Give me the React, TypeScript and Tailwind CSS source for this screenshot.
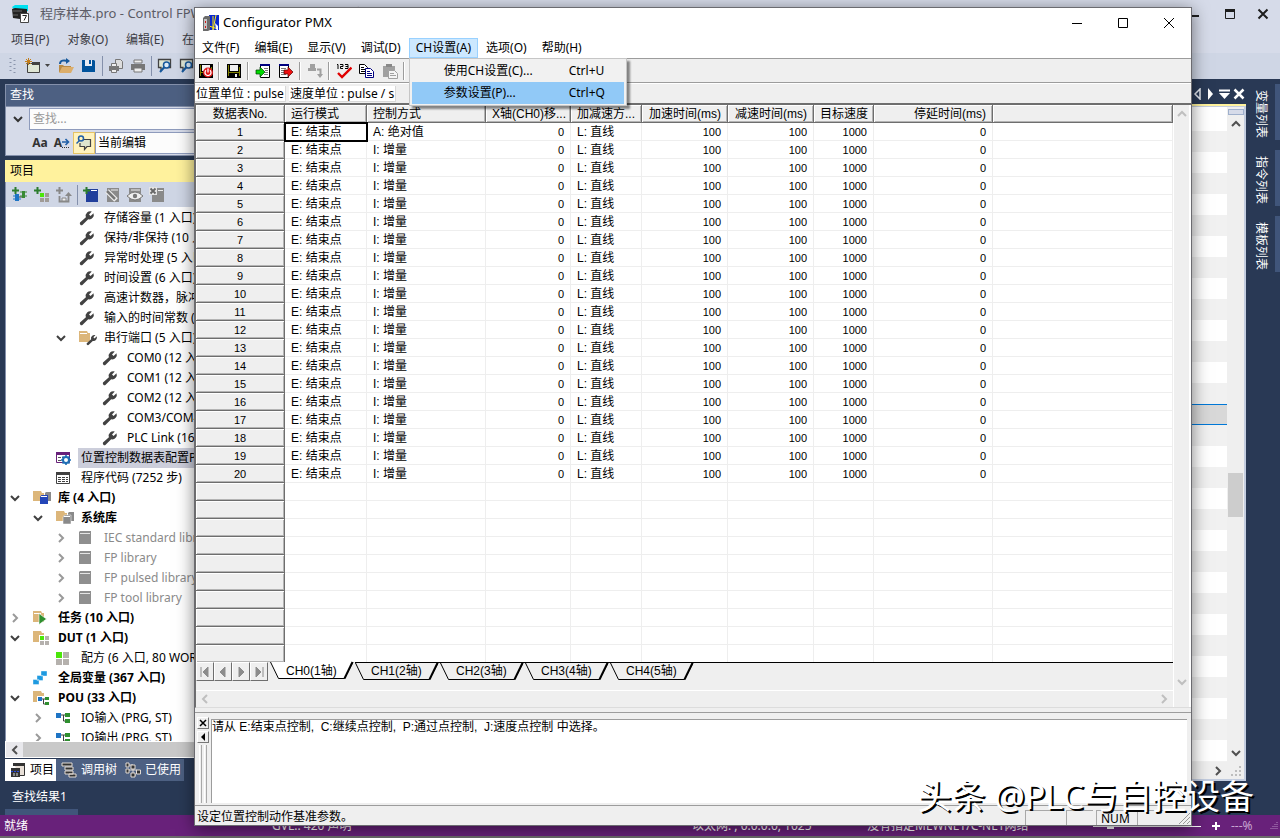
import { useState } from "react";
import type { ReactNode } from "react";
import clsx from "clsx";

const UI_FONT = "font-['Noto_Sans','Noto_Sans_CJK_SC',sans-serif]";
const GRID_FONT = "font-['Liberation_Sans','Noto_Sans_CJK_SC',sans-serif]";

/* ---------- icons ---------- */

type IconProps = { children: ReactNode; w?: number; h?: number };

const Icon = ({ children, w = 16, h = 16 }: IconProps) => (
  <svg width={w} height={h} viewBox={`0 0 ${w} ${h}`} fill="none" className="shrink-0" aria-hidden="true">
    {children}
  </svg>
);

type Direction = "up" | "down" | "left" | "right";

const chevrons: Record<Direction, string> = {
  up: "M1 7l4-4 4 4",
  down: "M1 3l4 4 4-4",
  left: "M7 1L3 5l4 4",
  right: "M3 1l4 4-4 4",
};

const Chevron = ({ dir, color = "#505050" }: { dir: Direction; color?: string }) => (
  <Icon w={10} h={10}>
    <path d={chevrons[dir]} stroke={color} strokeWidth="2" />
  </Icon>
);

const WRENCH =
  "M14.5 3.2L11.6 6 10 4.4l2.8-2.9A4.6 4.6 0 0 0 6.9 7.2L1 12.6A1.8 1.8 0 0 0 3.4 15l5.8-5.7A4.6 4.6 0 0 0 14.5 3.2z";

const FOLDER = "M0 1h8l1 2h2v9H0z";

const treeIcons: Record<string, ReactNode> = {
  wrench: (
    <Icon>
      <path d={WRENCH} fill="#424242" />
    </Icon>
  ),
  folderWrench: (
    <Icon w={19}>
      <path d={FOLDER} fill="#dcb67a" />
      <path d="M1 3.5h7" stroke="#fff" />
      <path d={WRENCH} fill="#424242" transform="translate(7 4) scale(.74)" />
    </Icon>
  ),
  config: (
    <Icon>
      <path d="M.5 2.5h13v10H.5z" fill="#fff" stroke="#68217a" />
      <path d="M0 2h14v3H0z" fill="#68217a" />
      <path d="M2 7.5h3M2 10.5h3M6 7.5h2" stroke="#555" />
      <circle cx="10" cy="10" r="3" fill="#fff" stroke="#1f6fb5" strokeWidth="2" />
      <path d="M10 5v2M10 13v2M5 10h2M13 10h2M6.5 6.5l1.3 1.3M12.2 12.2l1.3 1.3M13.5 6.5l-1.3 1.3M7.8 12.2l-1.3 1.3" stroke="#1f6fb5" strokeWidth="1.6" />
    </Icon>
  ),
  code: (
    <Icon>
      <path d="M.5 2.5h13v11H.5z" fill="#fff" stroke="#424242" />
      <path d="M0 2h14v3H0z" fill="#424242" />
      <path d="M2 7.5h10M2 9.5h10M2 11.5h10" stroke="#424242" strokeDasharray="3 1" />
    </Icon>
  ),
  library: (
    <Icon w={19}>
      <path d="M0 1h8l1 2h2v8H0z" fill="#dcb67a" />
      <path d="M12 3l1-1h5v9h-6z" fill="#8a8a8a" />
      <path d="M7 7l1.5-2H15v9H7z" fill="#2446b8" />
      <path d="M8 6.5h6" stroke="#fff" />
    </Icon>
  ),
  systemLibrary: (
    <Icon w={19}>
      <path d="M0 1h8l1 2h2v8H0z" fill="#dcb67a" />
      <path d="M12 3l1-1h5v9h-6z" fill="#8a8a8a" />
      <path d="M7 7l1.5-2H15v9H7z" fill="#8a8a8a" stroke="#fff" strokeWidth=".5" />
      <path d="M8 6.5h6" stroke="#fff" />
    </Icon>
  ),
  book: (
    <Icon>
      <path d="M0 2l1-1h11v13H0z" fill="#8f8f8f" />
      <path d="M1 3.5h10" stroke="#e4e4e4" />
    </Icon>
  ),
  task: (
    <Icon>
      <path d={FOLDER} fill="#dcb67a" />
      <path d="M1 3.5h7" stroke="#fff" />
      <path d="M6 3.5L13.5 9 6 14.5z" fill="#2f8f2f" stroke="#fff" strokeWidth=".6" />
    </Icon>
  ),
  dut: (
    <Icon>
      <path d={FOLDER} fill="#dcb67a" />
      <path d="M6 5h10v10H6z" fill="#fff" />
      <path d="M7 6h4v4H7z" fill="#4be60a" />
      <path d="M12 6h4v4h-4zM7 11h4v4H7zM12 11h4v4h-4z" fill="#b5b1ad" />
    </Icon>
  ),
  recipe: (
    <Icon>
      <path d="M0 2h6v6H0z" fill="#4be60a" />
      <path d="M7 2h6v6H7zM0 9h6v6H0zM7 9h6v6H7z" fill="#b5b1ad" />
    </Icon>
  ),
  globals: (
    <Icon>
      <path d="M8 1h6v5H8zM4 5.5h6v5H4zM0 9.5h6v5H0z" fill="#1e9ae0" stroke="#fff" strokeWidth=".4" />
    </Icon>
  ),
  pouFolder: (
    <Icon>
      <path d={FOLDER} fill="#dcb67a" />
      <path d="M4 6h12v10H4z" fill="#fff" />
      <path d="M9 9h4M10.5 9v5H13" stroke="#424242" />
      <path d="M5 7h4v4H5z" fill="#1e74c4" />
      <path d="M12 7h4v3h-4zM12 12h4v3h-4z" fill="#2f8f2f" />
    </Icon>
  ),
  pou: (
    <Icon>
      <path d="M5 5h5M7.5 5v6H10" stroke="#424242" />
      <path d="M0 3h5v5H0z" fill="#1e74c4" />
      <path d="M9 3h5v4H9zM9 9h5v4H9z" fill="#2f8f2f" />
    </Icon>
  ),
};

const Plus = ({ color }: { color: string }) => <path d="M3.5 0v7M0 3.5h7" stroke={color} strokeWidth="2" />;

const Floppy = ({ accent }: { accent?: boolean }) => (
  <Icon>
    <path d="M1 1h14v14H1z" fill="#000" />
    <path d="M2 2h1v11H2zM13 4h1v9h-1z" fill="#808000" />
    <path d="M4 2h8v6H4z" fill="#f0f0f0" />
    <path d="M3 9h10v1H3z" fill="#808000" />
    <path d="M9 11h2v3H9z" fill="#f0f0f0" />
    {accent && (
      <>
        <circle cx="10" cy="9.5" r="5" fill="#e01818" />
        <path d="M10 5.5v4M8 7.3a3 3 0 1 0 4 0" stroke="#fff" strokeWidth="1.3" />
      </>
    )}
  </Icon>
);

/* ---------- project tree ---------- */

type TreeItem = {
  level: 0 | 1 | 2 | 3;
  icon: string;
  label: string;
  open?: boolean;
  bold?: boolean;
  muted?: boolean;
  selected?: boolean;
};

const TREE: TreeItem[] = [
  { level: 2, icon: "wrench", label: "存储容量 (1 入口)" },
  { level: 2, icon: "wrench", label: "保持/非保持 (10 入口)" },
  { level: 2, icon: "wrench", label: "异常时处理 (5 入口)" },
  { level: 2, icon: "wrench", label: "时间设置 (6 入口)" },
  { level: 2, icon: "wrench", label: "高速计数器，脉冲输出 (8 入口)" },
  { level: 2, icon: "wrench", label: "输入的时间常数 (4 入口)" },
  { level: 2, icon: "folderWrench", label: "串行端口 (5 入口)", open: true },
  { level: 3, icon: "wrench", label: "COM0 (12 入口)" },
  { level: 3, icon: "wrench", label: "COM1 (12 入口)" },
  { level: 3, icon: "wrench", label: "COM2 (12 入口)" },
  { level: 3, icon: "wrench", label: "COM3/COM4 (12 入口)" },
  { level: 3, icon: "wrench", label: "PLC Link (16 入口)" },
  { level: 1, icon: "config", label: "位置控制数据表配置PMX", selected: true },
  { level: 1, icon: "code", label: "程序代码 (7252 步)" },
  { level: 0, icon: "library", label: "库 (4 入口)", open: true, bold: true },
  { level: 1, icon: "systemLibrary", label: "系统库", open: true, bold: true },
  { level: 2, icon: "book", label: "IEC standard library", open: false, muted: true },
  { level: 2, icon: "book", label: "FP library", open: false, muted: true },
  { level: 2, icon: "book", label: "FP pulsed library", open: false, muted: true },
  { level: 2, icon: "book", label: "FP tool library", open: false, muted: true },
  { level: 0, icon: "task", label: "任务 (10 入口)", open: false, bold: true },
  { level: 0, icon: "dut", label: "DUT (1 入口)", open: true, bold: true },
  { level: 1, icon: "recipe", label: "配方 (6 入口, 80 WORD)" },
  { level: 0, icon: "globals", label: "全局变量 (367 入口)", bold: true },
  { level: 0, icon: "pouFolder", label: "POU (33 入口)", open: true, bold: true },
  { level: 1, icon: "pou", label: "IO输入 (PRG, ST)", open: false },
  { level: 1, icon: "pou", label: "IO输出 (PRG, ST)", open: false },
];

const INDENTS = ["pl-px", "pl-6", "pl-[47px]", "pl-[70px]"];

const TreeRow = ({ item }: { item: TreeItem }) => (
  <li className={clsx("flex h-5 items-center whitespace-nowrap", INDENTS[item.level])}>
    <span className="flex w-4 shrink-0 justify-center">
      {item.open !== undefined && (
        <Chevron dir={item.open ? "down" : "right"} color={item.open ? "#404040" : "#9a9a9a"} />
      )}
    </span>
    <span className="ml-2.5 w-5 shrink-0">{treeIcons[item.icon]}</span>
    <span
      className={clsx(
        "ml-0.5 px-[3px] leading-5",
        item.bold && "font-bold",
        item.muted ? "text-[#8a8a8a]" : "text-black",
        item.selected && "flex-1 bg-[#cccedb]"
      )}
    >
      {item.label}
    </span>
  </li>
);

/* ---------- left dock ---------- */

const FindPanel = () => (
  <section>
    <h2 className="h-[22px] border border-b-0 border-[#8490ab] bg-[#4d6082] px-1 leading-5 text-white">查找</h2>
    <div className="flex h-[50px] flex-col gap-0.5 border border-[#8490ab] bg-[#d6dbe9] pt-px">
      <div className="flex h-[22px]">
        <button aria-label="展开" className="flex w-[23px] items-center justify-center">
          <Chevron dir="down" color="#333" />
        </button>
        <input
          type="text"
          aria-label="查找"
          placeholder="查找..."
          className="min-w-0 flex-1 border border-[#8e9bbc] bg-[#fcfcfc] px-[3px] placeholder:text-[#999]"
        />
      </div>
      <div className="flex h-[22px] pl-[23px]">
        <button aria-label="区分大小写" className="w-[22px] text-xs font-bold text-[#333]">
          Aa
        </button>
        <button aria-label="全字匹配" className="flex w-[22px] items-center justify-center text-xs font-bold text-[#333]">
          A
          <Icon w={8} h={12}>
            <path d="M0 5h6M3.5 2l3 3-3 3" stroke="#1f5fa8" strokeWidth="1.6" />
            <path d="M0 10.5h7" stroke="#333" strokeDasharray="1 1" />
          </Icon>
        </button>
        <button aria-label="查找范围" className="flex w-[22px] items-center justify-center border border-[#e5c365] bg-[#fff3be]">
          <Icon>
            <path d="M7 4.500h7.500v7H11l-2.500 3v-3H4V8" fill="#dfe6cf" stroke="#424242" strokeWidth="1.2" />
            <circle cx="5" cy="3.5" r="2.5" stroke="#1f5fa8" strokeWidth="1.5" />
            <path d="M3.5 5.5l-3 3" stroke="#1f5fa8" strokeWidth="1.5" />
          </Icon>
        </button>
        <select aria-label="范围" className="min-w-0 flex-1 appearance-none border border-[#8e9bbc] bg-[#fcfcfc] px-0.5">
          <option>当前编辑</option>
        </select>
      </div>
    </div>
  </section>
);

const ProjectToolbar = () => (
  <div className="flex h-[25px] items-center gap-[6px] border-l border-[#8490ab] bg-[#cfd6e5] pl-1.5">
    <button aria-label="添加 POU">
      <Icon>
        <path d="M6 10h5" stroke="#424242" />
        <path d="M3 7h4v7H3z" fill="#1e74c4" />
        <path d="M1 9h2M1 12h2M7 12h2" stroke="#1e74c4" />
        <path d="M10 4h3v7h-3z" fill="#388a34" />
        <path d="M8 5h7M8 9h7" stroke="#388a34" />
        <Plus color="#2d7d2d" />
      </Icon>
    </button>
    <button aria-label="添加 DUT">
      <Icon>
        <path d="M6 6h4v4H6z" fill="#4be60a" />
        <path d="M11 6h4v4h-4zM6 11h4v4H6zM11 11h4v4h-4z" fill="#a09b96" />
        <Plus color="#2d7d2d" />
      </Icon>
    </button>
    <button aria-label="添加操作">
      <Icon>
        <path d="M3.5 9v5.500h9V8" stroke="#888" strokeWidth="1.8" />
        <path d="M9 9l3.500-4L16 9z" fill="#888" />
        <path d="M6 11h4v3H6z" fill="#eee" stroke="#888" />
        <Plus color="#888" />
      </Icon>
    </button>
    <span className="-mx-px h-5 w-px bg-[#8490ab]" />
    <button aria-label="新建库">
      <Icon>
        <path d="M3 2h12v13H3z" fill="#213f9c" />
        <path d="M8 3.5h6" stroke="#fff" />
        <Plus color="#2d7d2d" />
      </Icon>
    </button>
    <button aria-label="编辑库">
      <Icon>
        <path d="M2 1h12v14H2z" fill="#8a8a8a" />
        <path d="M6 3h7" stroke="#eee" />
        <path d="M2 4l9 9" stroke="#eee" strokeWidth="5" />
        <path d="M2 4l8 8" stroke="#777" strokeWidth="2.5" />
      </Icon>
    </button>
    <button aria-label="查看库">
      <Icon>
        <path d="M2 1h12v14H2z" fill="#8a8a8a" />
        <path d="M4 3h9" stroke="#eee" />
        <path d="M0 9q8-8 16 0-8 8-16 0z" fill="#eee" stroke="#777" />
        <circle cx="8" cy="9" r="2.2" fill="#777" />
      </Icon>
    </button>
    <button aria-label="删除库">
      <Icon>
        <path d="M3 1h12v14H3z" fill="#8a8a8a" />
        <path d="M0 0h8v8H0z" fill="#e4e4e4" />
        <path d="M1.5 1.5l5 5M6.500 1.500l-5 5" stroke="#666" strokeWidth="1.8" />
        <path d="M9 3.5h5" stroke="#eee" />
      </Icon>
    </button>
  </div>
);

const DockTabs = () => (
  <div className="flex h-[22px] text-white">
    <button className="flex w-[51px] items-center gap-1 bg-white pl-[5px] text-black">
      <Icon>
        <path d="M3.5 1.500h11v12H10" fill="#e8e0d8" stroke="#333" />
        <path d="M3 1h12v3H3z" fill="#333" />
        <path d="M1 6h9v9H1z" fill="#333" />
        <path d="M1 9.5h9" stroke="#2a4be0" strokeDasharray="2 1" />
        <path d="M4 11v3M7 11v3" stroke="#ddd" />
      </Icon>
      项目
    </button>
    <button className="flex w-16 items-center gap-1 bg-[#4d6082] pl-[5px]">
      <Icon>
        <path d="M1 1h10v3H1zM4 5h8v3H4zM4 9h8v3H4zM8 12h7v3H8z" fill="#333" stroke="#e4dcd4" />
      </Icon>
      调用树
    </button>
    <button className="flex w-16 items-center gap-1 bg-[#4d6082] pl-[5px]">
      <Icon>
        <path d="M4 3h4v10h3M4 8h8" stroke="#e4dcd4" />
        <path d="M1 1h3v4H1zM1 7h3v4H1zM6 3h4v4H6zM6 11h4v4H6zM11.500 8h4v4h-4z" fill="#333" stroke="#e4dcd4" />
      </Icon>
      已使用
    </button>
  </div>
);

const LeftDock = () => (
  <aside className="flex w-80 shrink-0 flex-col pl-[5px]">
    <FindPanel />
    <h2 className="mt-1 h-[22px] bg-[#fff29d] px-[5px] leading-[22px]">项目</h2>
    <ProjectToolbar />
    <ul className="min-h-0 flex-1 overflow-hidden border-l border-[#8490ab] bg-white pt-px">
      {TREE.map((item) => (
        <TreeRow key={item.label} item={item} />
      ))}
    </ul>
    <div className="mb-px flex h-[17px] items-center border border-white bg-[#e8e8ec]">
      <button aria-label="向左滚动" className="flex w-[17px] justify-center">
        <Chevron dir="left" />
      </button>
      <div className="h-full flex-1 bg-[#c9c9c9]" />
    </div>
    <DockTabs />
  </aside>
);

/* ---------- background editor ---------- */

const SELECTED_LINE = 13;

const lineStyle = (i: number) => {
  if (i === SELECTED_LINE) return "border-y border-[#0078d7] bg-[#d8d8d8]";
  return i % 2 === 0 ? "bg-[#f1f1f1]" : "bg-white";
};

const EditorPane = () => (
  <main className="flex min-w-0 flex-1 flex-col">
    <div className="flex h-[22px] items-center justify-end gap-0.5 border-b-2 border-[#fff29d] pr-px">
      <button aria-label="上一个">
        <Icon w={10} h={12}>
          <path d="M8 1v10L3 6z" stroke="#e6e9f0" strokeWidth="1.5" />
        </Icon>
      </button>
      <button aria-label="下一个">
        <Icon w={12} h={12}>
          <path d="M4 0v12l5-6z" fill="#fff" />
        </Icon>
      </button>
      <button aria-label="窗口列表">
        <Icon w={13} h={12}>
          <path d="M1 2.5h11" stroke="#fff" strokeWidth="2" />
          <path d="M1 5h11l-5.500 6z" fill="#fff" />
        </Icon>
      </button>
      <button aria-label="关闭">
        <Icon w={12} h={12}>
          <path d="M1.5 1.5l9 9M10.500 1.500l-9 9" stroke="#fff" strokeWidth="2.5" />
        </Icon>
      </button>
    </div>
    <div className="flex min-h-0 flex-1 flex-col border-2 border-l-0 border-t border-[#c3cde0] bg-white">
      <div className="flex min-h-0 flex-1">
        <div className="flex-1 overflow-hidden pt-6">
          {Array.from({ length: 31 }, (_, i) => (
            <div key={i} className={clsx("h-[21px]", lineStyle(i))} />
          ))}
        </div>
        <div className="flex w-[17px] flex-col items-center bg-[#efefef]">
          <div className="mt-0.5 h-1.5 w-4 border border-[#9fb0cc] bg-[#d6dbe9]" />
          <button aria-label="向上滚动" className="flex h-[18px] items-center">
            <Chevron dir="up" />
          </button>
          <div className="flex flex-1 flex-col justify-center">
            <div className="mt-28 h-11 w-[15px] bg-[#cdcdcd]" />
          </div>
          <button aria-label="向下滚动" className="flex h-[18px] items-center">
            <Chevron dir="down" />
          </button>
        </div>
      </div>
      <div className="flex h-[17px] items-center justify-end gap-2 bg-[#efefef] pr-px">
        <button aria-label="向右滚动">
          <Chevron dir="right" />
        </button>
        <Icon w={12} h={12}>
          <path d="M8 1h2v2H8zM4 5h2v2H4zM8 5h2v2H8zM0 9h2v2H0zM4 9h2v2H4zM8 9h2v2H8z" fill="#bdbdbd" />
        </Icon>
      </div>
    </div>
  </main>
);

const RightDock = () => (
  <nav className="flex w-[34px] shrink-0 flex-col gap-2.5">
    {["变量列表", "指令列表", "模板列表"].map((label) => (
      <button
        key={label}
        className="flex h-14 items-center justify-center border-r-[5px] border-[#40557a] pt-1 text-white [text-orientation:sideways] [writing-mode:vertical-rl]"
      >
        {label}
      </button>
    ))}
  </nav>
);

/* ---------- shell title and toolbars ---------- */

const ShellHeader = () => (
  <header className="bg-[#d6dbe9]">
    <div className="flex h-[27px] items-center pl-3 pr-1">
      <Icon w={18} h={18}>
        <path d="M0 2l3-2h13v6L4 7z" fill="#00e0f0" />
        <path d="M0 4l3-1 12 1v11L1 13z" fill="#222" />
        <path d="M1 6h9M1 10h5" stroke="#666" />
        <path d="M8.5 8.5h8v9h-8z" fill="#fff" stroke="#444" />
        <path d="M10.5 10.5h4L12 15.5" stroke="#222" />
      </Icon>
      <h1 className="ml-2.5 flex-1 whitespace-nowrap text-[13px] text-[#5c5c66]">
        程序样本.pro - Control FPWIN Pro 7 - [编程环境: 全局变量]
      </h1>
      <button aria-label="最小化窗口" className="flex w-8 justify-center">
        <Icon w={12} h={12}>
          <path d="M1 8h10" stroke="#1e1e1e" strokeWidth="2" />
        </Icon>
      </button>
      <button aria-label="还原窗口" className="flex w-10 justify-center">
        <Icon w={12} h={12}>
          <path d="M1.5 1.5h9v9h-9z" stroke="#1e1e1e" />
          <path d="M1 1h10v3H1z" fill="#1e1e1e" />
        </Icon>
      </button>
      <button aria-label="关闭窗口" className="flex w-[26px] justify-center">
        <Icon w={12} h={12}>
          <path d="M1.5 1.5l9 9M10.500 1.500l-9 9" stroke="#1e1e1e" strokeWidth="2" />
        </Icon>
      </button>
    </div>
    <div className="flex h-[26px] items-center gap-[18px] pl-[11px] text-[#3c3c44]">
      {["项目(P)", "对象(O)", "编辑(E)", "在线(L)"].map((label) => (
        <button key={label} className="whitespace-nowrap">
          {label}
        </button>
      ))}
    </div>
    <div className="flex h-[26px] items-center bg-[#cfd6e5] pl-2">
      <Icon w={9} h={18}>
        <path d="M2.5 1v16M6.5 3v14" stroke="#8a94ab" strokeDasharray="1 3" strokeWidth="2" />
      </Icon>
      <button aria-label="新建" className="ml-2">
        <Icon>
          <path d="M2.5 5.5h12v9h-12z" fill="#dfe6d5" stroke="#424242" />
          <path d="M7 4h8v3H7z" fill="#424242" />
          <path d="M3.5 0v7M0 3.500h7M1 1l5 5M6 1L1 6" stroke="#c27d1a" />
        </Icon>
      </button>
      <Icon w={9} h={8}>
        <path d="M4 2h5L6.500 5z" fill="#444" />
      </Icon>
      <button aria-label="打开" className="ml-2">
        <Icon>
          <path d="M1 7h4l1 1h7v6H1z" fill="#b98a45" />
          <path d="M4 9h12l-3 6H1z" fill="#dcae6b" />
          <path d="M2 6c0-4 4-4 8-3" stroke="#17599c" strokeWidth="2" />
          <path d="M8 0l4 3-4 3z" fill="#17599c" />
        </Icon>
      </button>
      <button aria-label="保存" className="ml-[7px]">
        <Icon>
          <path d="M1 2h12l1 1v11H1z" fill="#00539c" />
          <path d="M4 2h7v6H4z" fill="#e8edf5" />
          <path d="M8 2h2v4H8z" fill="#00539c" />
        </Icon>
      </button>
      <span className="mx-[5px] h-5 w-px bg-[#8490ab]" />
      <button aria-label="打印预览">
        <Icon>
          <path d="M7.5 1.5h5l2 2v7h-7z" fill="#ddd" stroke="#777" />
          <path d="M1 8h10v5H1z" fill="#777" />
          <path d="M3.5 5.5h5v3h-5zM3.500 11.500h5v3h-5z" fill="#eee" stroke="#777" />
        </Icon>
      </button>
      <button aria-label="打印" className="ml-[6px]">
        <Icon>
          <path d="M4 2h8v3H4z" fill="#eee" stroke="#777" />
          <path d="M1 6h14v6H1z" fill="#777" />
          <path d="M4 10h8v4H4z" fill="#eee" stroke="#777" />
        </Icon>
      </button>
      <span className="mx-[5px] h-5 w-px bg-[#8490ab]" />
      {["查找", "查找下一个"].map((label) => (
        <button key={label} aria-label={label} className="mr-[6px]">
          <Icon>
            <path d="M1.5 1.5h12v8H7l-3 3v-3H1.500z" fill="#dfe6d5" stroke="#424242" strokeWidth="1.3" />
            <circle cx="9.5" cy="7" r="3" fill="#dcebf7" stroke="#17599c" strokeWidth="1.5" />
            <path d="M7.5 9L3 14" stroke="#17599c" strokeWidth="2" />
          </Icon>
        </button>
      ))}
    </div>
  </header>
);

const ShellStatus = () => (
  <footer className="flex h-[23px] items-center justify-between whitespace-nowrap border-b-2 border-[#6b6b6b] bg-[#68217a] pl-1 pr-px text-white">
    <div className="flex">
      <span className="w-[268px]">就绪</span>
      <span className="w-[420px]">GVL:: 420 声明</span>
      <span className="w-[175px]">以太网: , 0.0.0.0, 1025</span>
      <span>没有指定MEWNET/C-NET网络</span>
    </div>
    <div className="flex items-center">
      <Icon w={118} h={12}>
        <path d="M0 6.5h108" stroke="#fff" />
        <path d="M14 3h7v6h-7z" fill="#fff" />
      </Icon>
      <Icon w={10} h={10}>
        <path d="M5 1v8M1 5h8" stroke="#fff" strokeWidth="2" />
      </Icon>
      <span className="ml-2.5 w-[38px] text-[#c9a6d2]">---%</span>
      <Icon w={10} h={10}>
        <path d="M8 1v1M6 3v1M8 3v1M4 5v1M6 5v1M8 5v1M2 7v1M4 7v1M6 7v1M8 7v1" stroke="#b48dc0" />
      </Icon>
    </div>
  </footer>
);

/* ---------- configurator window ---------- */

const COLUMNS = [
  { title: "数据表No.", width: "w-[89px]", align: "text-center" },
  { title: "运行模式", width: "w-[82px]", align: "text-left" },
  { title: "控制方式", width: "w-[119px]", align: "text-left" },
  { title: "X轴(CH0)移...", width: "w-[85px]", align: "text-right" },
  { title: "加减速方...", width: "w-[71px]", align: "text-left" },
  { title: "加速时间(ms)", width: "w-[86px]", align: "text-right" },
  { title: "减速时间(ms)", width: "w-[86px]", align: "text-right" },
  { title: "目标速度", width: "w-[60px]", align: "text-right" },
  { title: "停延时间(ms)", width: "w-[119px]", align: "text-right" },
  { title: "", width: "", align: "text-left" },
];

const rowValues = (i: number) =>
  i < 20
    ? ["E: 结束点", i === 0 ? "A: 绝对值" : "I: 增量", "0", "L: 直线", "100", "100", "1000", "0", ""]
    : Array<string>(9).fill("");

const BEVEL = "border-b border-r border-[#6e6e6e] bg-[#efefef] shadow-[inset_1px_1px_0_#fff,inset_-1px_-1px_0_#b4b4b4]";

const DataGrid = () => (
  <div className="min-h-0 flex-1 overflow-hidden bg-white">
    <table className={clsx("w-full table-fixed border-separate border-spacing-0 text-xs", GRID_FONT)}>
      <colgroup>
        {COLUMNS.map((c) => (
          <col key={c.title} className={c.width} />
        ))}
      </colgroup>
      <thead>
        <tr>
          {COLUMNS.map((c) => (
            <th
              key={c.title}
              className={clsx(
                "h-[18px] overflow-hidden whitespace-nowrap px-1.5 pb-0 pt-0.5 font-normal leading-[15px]",
                BEVEL,
                c.align
              )}
            >
              {c.title}
            </th>
          ))}
        </tr>
      </thead>
      <tbody>
        {Array.from({ length: 30 }, (_, i) => (
          <tr key={i}>
            <th className={clsx("h-[18px] px-0 pb-0 pt-0.5 text-center text-[11px] font-normal leading-[15px]", BEVEL)}>
              {i < 20 ? i + 1 : ""}
            </th>
            {rowValues(i).map((value, c) => {
              const col = COLUMNS[c + 1];
              const active = i === 0 && c === 0;
              return (
                <td
                  key={c}
                  className={clsx(
                    "h-[18px] whitespace-nowrap border-b border-r border-[#eeeeee] px-1.5 pb-0 pt-0.5 leading-[15px]",
                    col.align,
                    col.align === "text-right" && "text-[11px]",
                    active && "outline-2 -outline-offset-1 outline-black"
                  )}
                >
                  {value}
                </td>
              );
            })}
          </tr>
        ))}
      </tbody>
    </table>
  </div>
);

const NAV_ICONS = [
  { label: "第一页", d: "M3 2v10M10 2v10L5 7z" },
  { label: "上一页", d: "M9 2v10L4 7z" },
  { label: "下一页", d: "M5 2v10l5-5z" },
  { label: "最后一页", d: "M11 2v10M4 2v10l5-5z" },
];

const SheetTabs = () => {
  const [active, setActive] = useState(0);
  const tabs = ["CH0(1轴)", "CH1(2轴)", "CH2(3轴)", "CH3(4轴)", "CH4(5轴)"];
  return (
    <div className="flex h-7 bg-[#efefef]">
      {NAV_ICONS.map((n) => (
        <button
          key={n.label}
          aria-label={n.label}
          className="flex h-[19px] w-[18px] items-center justify-center border border-b-[#6e6e6e] border-l-white border-r-[#6e6e6e] border-t-white"
        >
          <Icon w={14} h={14}>
            <path d={n.d} fill="#8c8c8c" stroke="#8c8c8c" />
          </Icon>
        </button>
      ))}
      <div className="flex flex-1 pl-0.5">
        {tabs.map((label, i) => (
          <button
            key={label}
            onClick={() => setActive(i)}
            className={clsx(
              "relative h-[18px] w-[85px] pl-4 text-left text-xs leading-[17px]",
              GRID_FONT,
              i !== active && "border-t border-black"
            )}
          >
            <svg className="absolute -top-px left-0" width="85" height="20" viewBox="0 0 85 20" aria-hidden="true">
              <path
                d="M.5 1l8 16.5h66L83 1"
                fill={i === active ? "#fff" : "#efefef"}
                stroke="#000"
              />
              <path d="M74.5 17.5L82.500 1" stroke="#000" strokeWidth="2" />
            </svg>
            <span className="relative">{label}</span>
          </button>
        ))}
        <div className="flex-1 border-t border-black" />
      </div>
    </div>
  );
};

const MENU = ["文件(F)", "编辑(E)", "显示(V)", "调试(D)", "CH设置(A)", "选项(O)", "帮助(H)"];

const ChannelMenu = () => (
  <div
    role="menu"
    className="absolute left-0 top-5 z-20 w-[218px] border border-[#c6c6c6] bg-[#f1f1f1] px-0.5 py-px shadow-[3px_3px_2px_rgba(0,0,0,0.45)]"
  >
    <button role="menuitem" className="flex h-[22px] w-full items-center pl-8 text-left">
      <span className="w-[125px]">使用CH设置(C)...</span>
      <span>Ctrl+U</span>
    </button>
    <button role="menuitem" className="flex h-[22px] w-full items-center bg-[#91c9f7] pl-8 text-left">
      <span className="w-[125px]">参数设置(P)...</span>
      <span>Ctrl+Q</span>
    </button>
  </div>
);

const MenuBar = () => (
  <nav className="flex h-[22px] items-start gap-px pt-0.5">
    {MENU.map((label) => {
      const open = label.startsWith("CH");
      return (
        <div key={label} className="relative">
          <button
            className={clsx(
              "h-5 whitespace-nowrap border px-1.5 leading-[18px]",
              open ? "border-[#99d1ff] bg-[#cce8ff]" : "border-transparent"
            )}
          >
            {label}
          </button>
          {open && <ChannelMenu />}
        </div>
      );
    })}
  </nav>
);

const ToolButton = ({ label, children }: { label: string; children: ReactNode }) => (
  <button aria-label={label} className="flex h-5 w-[23px] items-center justify-center first:w-[21px]">
    {children}
  </button>
);

const ToolSeparator = () => <span className="mx-0.5 h-[18px] w-0.5 border-l border-[#9c9c9c] bg-white" />;

const ConfigToolbar = () => (
  <div className="flex h-6 items-center border-b border-[#9c9c9c] bg-[#efefef]">
    <ToolButton label="写入并退出">
      <Floppy accent />
    </ToolButton>
    <ToolSeparator />
    <ToolButton label="保存">
      <Floppy />
    </ToolButton>
    <ToolSeparator />
    <ToolButton label="导入">
      <Icon>
        <path d="M5.5 1.5h9v13h-9z" fill="#fff" stroke="#000" />
        <path d="M5 1h10v2H5z" fill="#000080" />
        <path d="M9 5.5h4M10 7.5h3M10 9.5h3M9 11.5h4" stroke="#777" />
        <path d="M1 7h4V4l5 5-5 5v-3H1z" fill="#00d800" stroke="#003c00" strokeWidth=".7" />
      </Icon>
    </ToolButton>
    <ToolButton label="导出">
      <Icon>
        <path d="M1.5 1.5h9v13h-9z" fill="#fff" stroke="#000" />
        <path d="M1 1h10v2H1z" fill="#000080" />
        <path d="M3 5.5h5M3 7.5h3M3 9.5h3M3 11.5h5" stroke="#777" />
        <path d="M6 7h4V4l5 5-5 5v-3H6z" fill="#f01010" stroke="#500" strokeWidth=".7" />
      </Icon>
    </ToolButton>
    <ToolSeparator />
    <ToolButton label="下载">
      <Icon>
        <path d="M3 1h5v4H3zM1 5h8v3H1z" fill="#a0a0a0" />
        <path d="M10 6.5h3.500V13" stroke="#a0a0a0" strokeWidth="2" />
        <path d="M10 11h6l-3 4z" fill="#a0a0a0" />
      </Icon>
    </ToolButton>
    <ToolSeparator />
    <ToolButton label="检查数据">
      <Icon>
        <path d="M1 1.5h1V6M4 1.500h3V3.500H4.500V5.500H7M9 1.500h3v4H9M9.500 3.500H12" stroke="#000" />
        <path d="M2 10l4 4 9.500-9.500" stroke="#e00000" strokeWidth="2.4" />
      </Icon>
    </ToolButton>
    <ToolButton label="复制">
      <Icon>
        <path d="M.5 1.5h5l3 3v6h-8z" fill="#fff" stroke="#000" />
        <path d="M2 4.5h3M2 6.5h4M2 8.5h4" stroke="#000" />
        <path d="M6.5 5.5h5l3 3v6h-8z" fill="#fff" stroke="#000080" />
        <path d="M8 8.5h3M8 10.5h5M8 12.5h5" stroke="#000080" />
      </Icon>
    </ToolButton>
    <ToolButton label="粘贴">
      <Icon>
        <path d="M1 3h12v11H1z" fill="#a0a0a0" />
        <path d="M4 1h6v3H4z" fill="#888" />
        <path d="M6.5 7.5h6l3 3v5h-9z" fill="#f4f4f4" stroke="#a0a0a0" />
        <path d="M8 10.5h4M8 12.5h6" stroke="#a0a0a0" />
      </Icon>
    </ToolButton>
    <ToolSeparator />
  </div>
);

const SMALL_BUTTON =
  "flex h-3 w-3 items-center justify-center border border-b-[#777] border-l-white border-r-[#777] border-t-white";

const HelpPanel = () => (
  <section className="flex h-[93px] border-t border-[#9c9c9c] bg-[#efefef] pb-0.5 pt-1">
    <div className="flex w-4 flex-col items-center gap-0.5">
      <button aria-label="关闭说明" className={SMALL_BUTTON}>
        <Icon w={8} h={8}>
          <path d="M1 1l6 6M7 1L1 7" stroke="#000" strokeWidth="1.5" />
        </Icon>
      </button>
      <button aria-label="折叠说明" className={SMALL_BUTTON}>
        <Icon w={8} h={8}>
          <path d="M6 0v8L2 4z" fill="#000" />
        </Icon>
      </button>
      <div className="flex w-2 flex-1 gap-0.5">
        <span className="flex-1 border-l border-r border-[#a8a8a8] border-l-white" />
        <span className="flex-1 border-l border-r border-[#a8a8a8] border-l-white" />
      </div>
    </div>
    <p className={clsx("mr-1 mt-0.5 flex-1 border-l border-t border-[#9c9c9c] bg-white text-xs leading-[14px]", GRID_FONT)}>
      请从 E:结束点控制,&nbsp; C:继续点控制,&nbsp; P:通过点控制,&nbsp; J:速度点控制 中选择。
    </p>
  </section>
);

const STATUS_CELLS = [
  { text: "", width: "w-[38px]" },
  { text: "", width: "w-[27px]" },
  { text: "NUM", width: "w-[38px]" },
  { text: "", width: "w-[38px]" },
];

const ConfiguratorWindow = () => (
  <div className="absolute bottom-3 left-[194px] right-[88px] top-[7px] z-10 flex flex-col border border-[#6b6b70] bg-white shadow-[0_3px_16px_rgba(0,0,0,0.5)]">
    <div className="flex h-7 items-center pl-[7px] pt-0.5">
      <Icon w={17} h={17}>
        <path d="M7 0h10v15H7z" fill="#0a28d0" />
        <path d="M11 1v14M7 11l9 3M14 0l-3 15" stroke="#ffe818" />
        <path d="M1 3l2-2h5v14l-2 1H1z" fill="#6b6b6b" />
        <path d="M2 4h3v10H2z" fill="#c4c4c4" />
        <path d="M3 6h1v2H3zM3 11h1v2H3z" fill="#d01818" />
        <path d="M13 8l3 3v5l-2-2z" fill="#fff" />
      </Icon>
      <h2 className="ml-1 flex-1 text-[13px]">Configurator PMX</h2>
      <button aria-label="最小化" className="flex w-[46px] justify-center">
        <Icon w={10} h={10}>
          <path d="M0 5.5h10" stroke="#000" />
        </Icon>
      </button>
      <button aria-label="最大化" className="flex w-[46px] justify-center">
        <Icon w={10} h={10}>
          <path d="M.5.5h9v9h-9z" stroke="#000" />
        </Icon>
      </button>
      <button aria-label="关闭" className="flex w-[45px] justify-center">
        <Icon w={10} h={10}>
          <path d="M0 0l10 10M10 0L0 10" stroke="#000" />
        </Icon>
      </button>
    </div>
    <MenuBar />
    <div className="border-t border-[#9c9c9c]">
      <ConfigToolbar />
      <div className="flex h-5 items-center gap-[3px] border-t border-white bg-[#efefef]">
        <span className="h-4 border-b border-r border-[#d8d8d8] bg-white px-px leading-4">位置单位 : pulse</span>
        <span className="h-4 border-b border-r border-[#d8d8d8] bg-white px-px leading-4">速度单位 : pulse / s</span>
      </div>
    </div>
    <div className="flex min-h-0 flex-1 border-b border-l border-t-2 border-b-[#dcdcdc] border-l-[#6e6e6e] border-t-[#6e6e6e]">
      <div className="flex min-w-0 flex-1 flex-col">
        <DataGrid />
        <SheetTabs />
        <div className="flex h-[17px] items-center justify-between border-t border-white bg-[#efefef] px-1">
          <button aria-label="向左滚动表格">
            <Chevron dir="left" color="#bfbfbf" />
          </button>
          <button aria-label="向右滚动表格">
            <Chevron dir="right" color="#bfbfbf" />
          </button>
        </div>
      </div>
      <div className="mr-0.5 flex w-4 flex-col items-center justify-between border-l border-white bg-[#efefef] pb-5 pt-1">
        <button aria-label="向上滚动表格">
          <Chevron dir="up" color="#bfbfbf" />
        </button>
        <button aria-label="向下滚动表格">
          <Chevron dir="down" color="#bfbfbf" />
        </button>
      </div>
    </div>
    <div className="h-1 bg-[#efefef]" />
    <HelpPanel />
    <footer className="flex h-5 border-t border-[#9c9c9c] bg-[#efefef] pt-0.5">
      <span className="flex-1 pl-0.5 leading-[18px]">设定位置控制动作基准参数。</span>
      <div className="flex gap-[3px] pt-0.5">
        {STATUS_CELLS.map((cell, i) => (
          <span key={i} className={clsx("h-[15px] border-l border-t border-[#a8a8a8] pl-1 leading-[15px]", cell.width)}>
            {cell.text}
          </span>
        ))}
      </div>
      <span className="flex w-4 items-end justify-end">
        <Icon w={13} h={13}>
          <path d="M1 12L12 1M5 12l7-7M9 12l3-3" stroke="#999" />
        </Icon>
      </span>
    </footer>
  </div>
);

export default function App() {
  return (
    <div className={clsx("relative flex h-screen flex-col overflow-hidden bg-[#293955] text-xs text-black", UI_FONT)}>
      <ShellHeader />
      <div className="flex min-h-0 flex-1 pt-[5px]">
        <LeftDock />
        <EditorPane />
        <RightDock />
      </div>
      <div className="flex h-[34px] flex-col justify-between pl-[5px]">
        <button className="w-[73px] pl-[7px] pt-1.5 text-left leading-5 text-white">查找结果1</button>
        <span className="h-1.5 w-[73px] bg-[#40557a]" />
      </div>
      <ShellStatus />
      <ConfiguratorWindow />
      <div className="pointer-events-none absolute bottom-[18px] right-[26px] z-30 whitespace-nowrap text-[34px] leading-[48px] text-white [text-shadow:2px_2px_0_#000]">
        头条 @PLC与自控设备
      </div>
    </div>
  );
}
